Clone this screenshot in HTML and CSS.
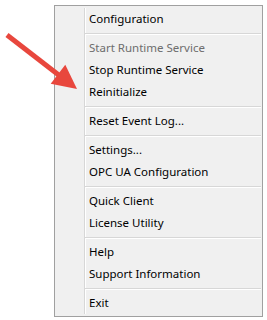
FILE: index.html
```html
<!DOCTYPE html>
<html>
<head>
<meta charset="utf-8">
<link rel="stylesheet" href="styles.css">
</head>
<body>
<div class="menu">
  <div class="item">Configuration</div>
  <div class="sep"></div>
  <div class="item disabled">Start Runtime Service</div>
  <div class="item">Stop Runtime Service</div>
  <div class="item">Reinitialize</div>
  <div class="sep"></div>
  <div class="item">Reset Event Log...</div>
  <div class="sep"></div>
  <div class="item">Settings...</div>
  <div class="item">OPC UA Configuration</div>
  <div class="sep"></div>
  <div class="item">Quick Client</div>
  <div class="item">License Utility</div>
  <div class="sep"></div>
  <div class="item">Help</div>
  <div class="item">Support Information</div>
  <div class="sep"></div>
  <div class="item">Exit</div>
</div>
<svg class="arrow" width="90" height="100" viewBox="0 0 90 100">
  <line x1="7" y1="35" x2="60" y2="76" stroke="#e8473d" stroke-width="5" stroke-linecap="butt"/>
  <polygon points="77,89 50.7,83.8 65.3,64.8" fill="#e8473d"/>
</svg>
</body>
</html>
```
FILE: styles.css
```css
html, body {
  margin: 0;
  padding: 0;
  background: #ffffff;
}
body {
  position: relative;
  width: 267px;
  height: 320px;
  overflow: hidden;
  font-family: "Noto Sans", "Open Sans", sans-serif;
  font-size: 11.5px;
}
.menu {
  margin: 5px 0 0 54px;
  width: 207px;
  padding: 2px 0;
  border: 1px solid #a0a0a0;
  background: linear-gradient(to right, transparent 29px, #d7d7d7 29px, #d7d7d7 30px, #ffffff 30px, #ffffff 31px, transparent 31px) content-box, #f0f0f0;
  display: flex;
  flex-direction: column;
}
.item {
  height: 22px;
  line-height: 22px;
  padding-left: 34px;
  color: #000000;
  white-space: nowrap;
}
.item.disabled {
  color: #6d6d6d;
}
.sep {
  height: 7px;
  margin: 0 1px 0 30px;
  background: linear-gradient(to bottom, transparent 3px, #d7d7d7 3px, #d7d7d7 4px, #ffffff 4px, #ffffff 5px, transparent 5px);
}
.arrow {
  position: absolute;
  left: 0;
  top: 0;
}
```
